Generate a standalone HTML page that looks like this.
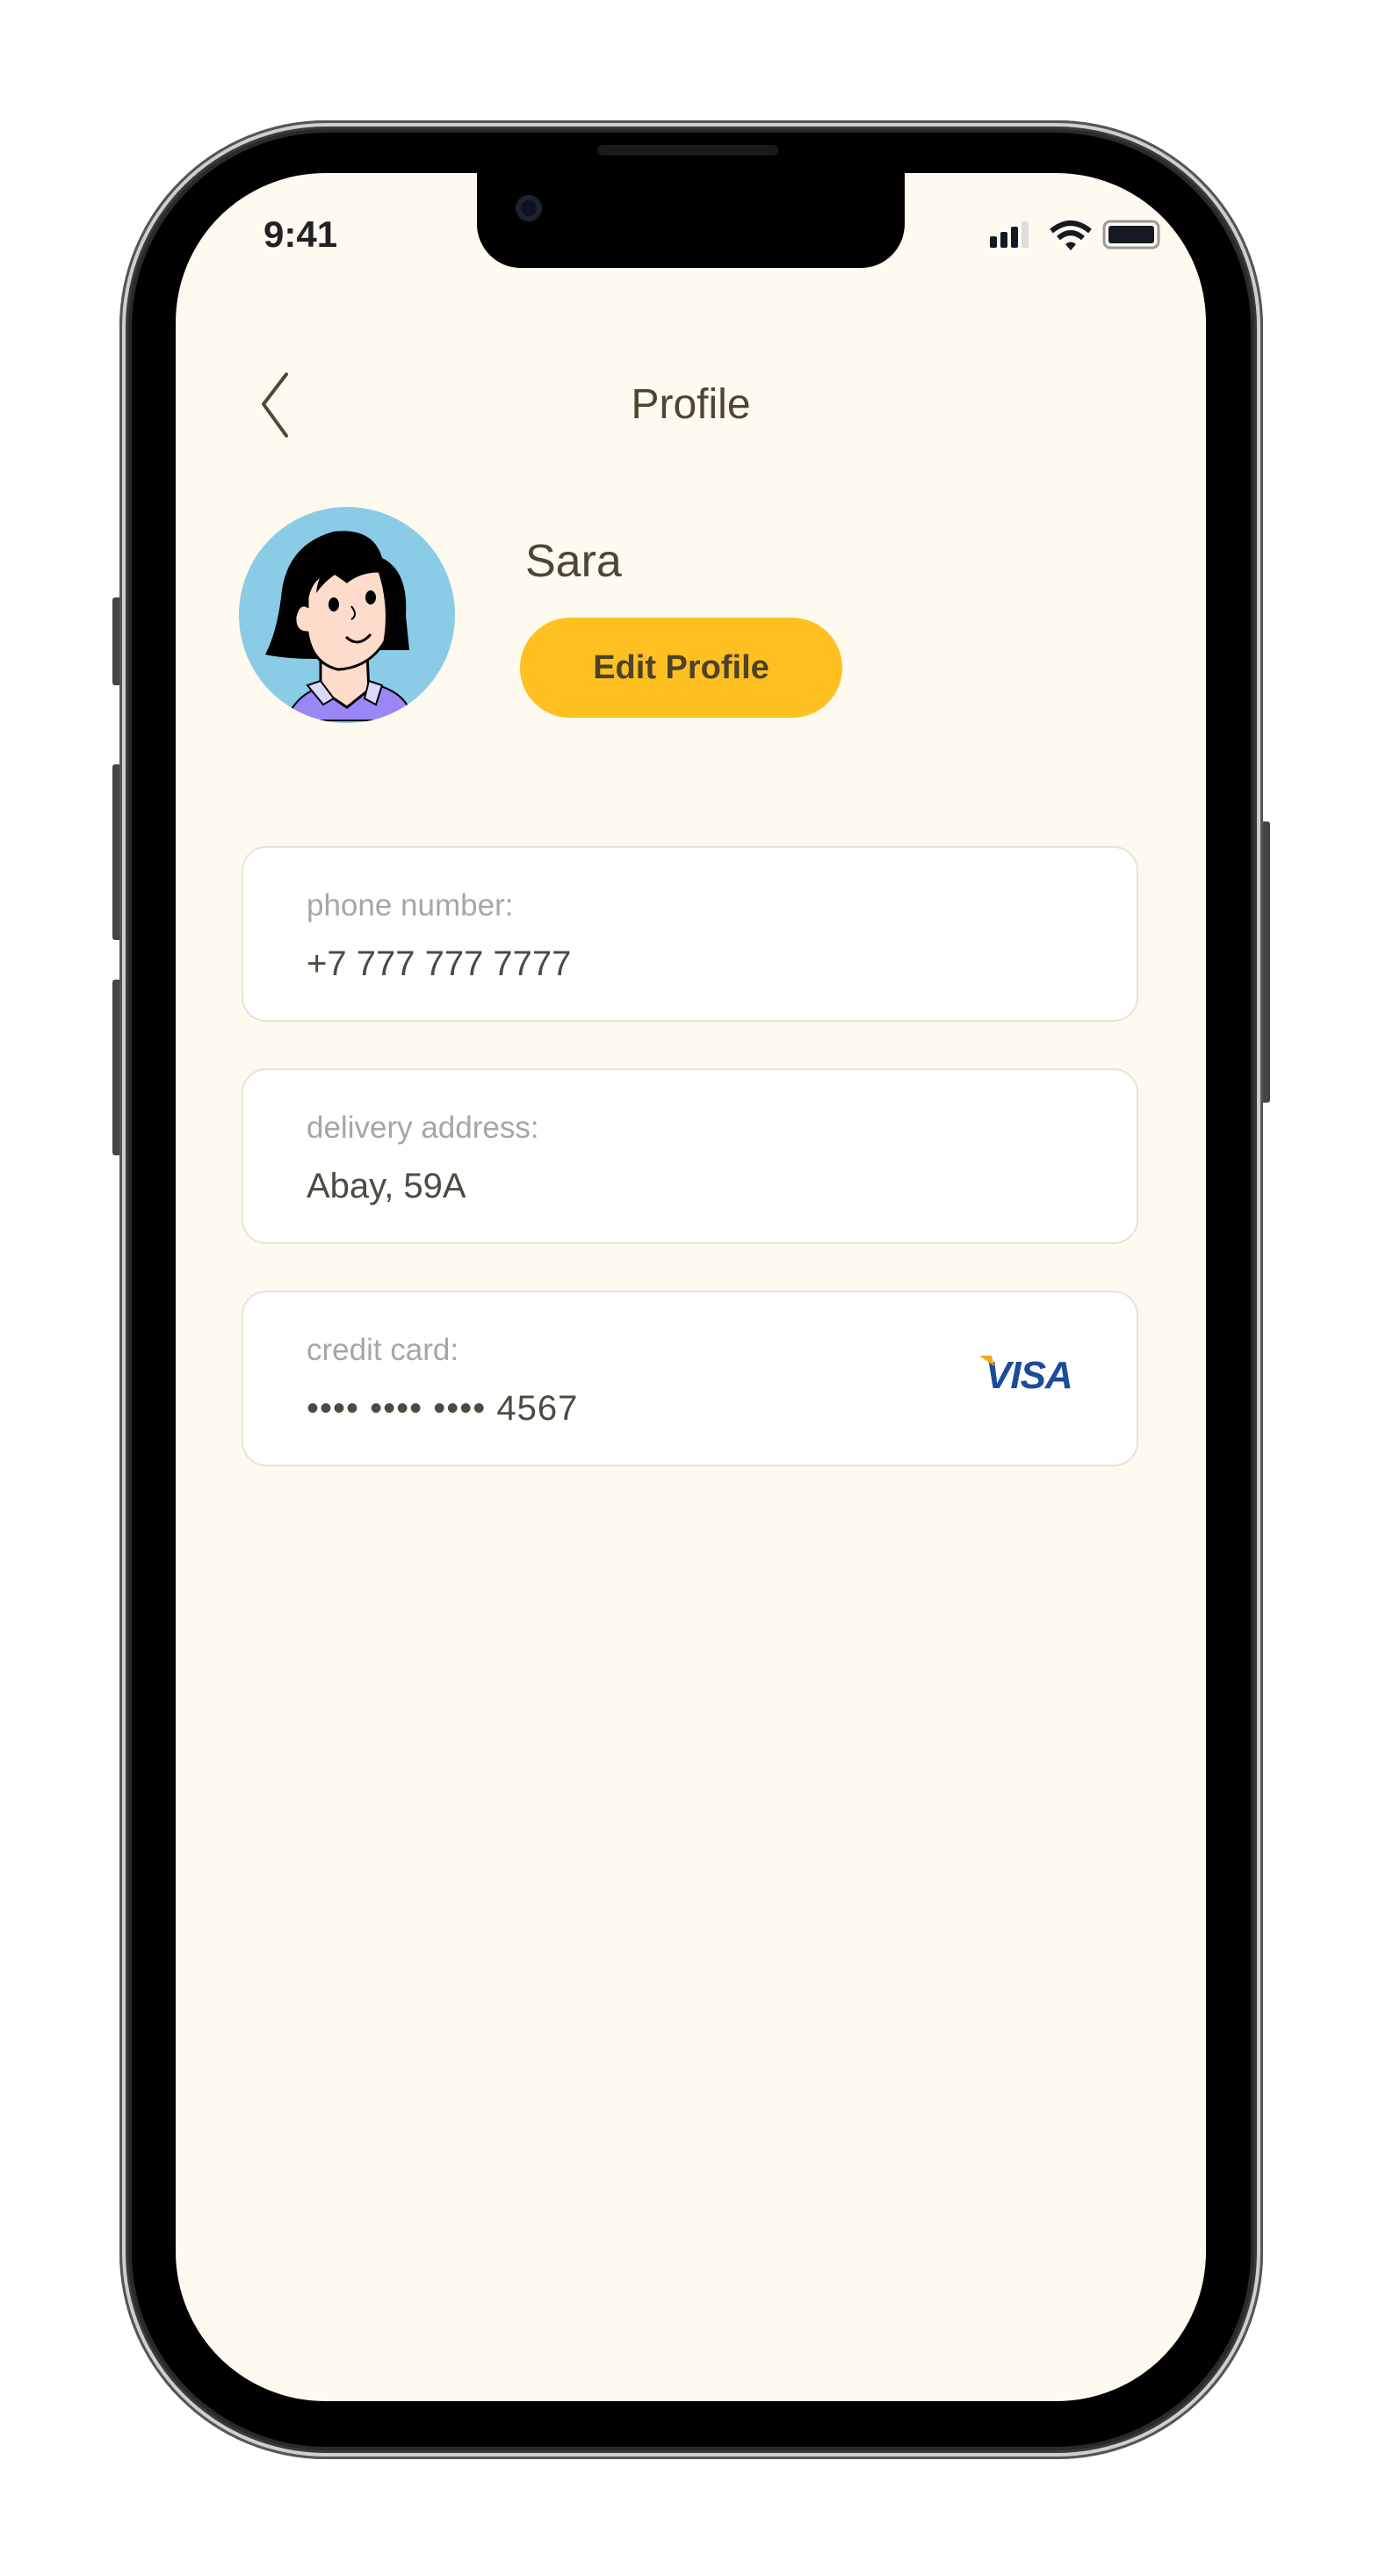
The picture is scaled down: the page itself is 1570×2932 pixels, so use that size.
<!DOCTYPE html>
<html><head><meta charset="utf-8"><style>
html,body{margin:0;padding:0;background:#fff;}
body{width:1570px;height:2932px;position:relative;overflow:hidden;font-family:"Liberation Sans",sans-serif;}
.abs{position:absolute;}
.outer{left:136px;top:137px;width:1302px;height:2662px;border-radius:235px;background:#2a2a2a;box-shadow:inset 0 0 0 3px #555,inset 0 0 0 7px #cfcfcf,inset 0 0 0 10px #3a3a3a;}
.bezel{left:150px;top:151px;width:1274px;height:2634px;border-radius:222px;background:#000;}
.screen{left:200px;top:197px;width:1173px;height:2536px;border-radius:170px;background:#fefaef;overflow:hidden;}
.notch{left:343px;top:-10px;width:487px;height:118px;background:#000;border-radius:0 0 50px 50px;}
.card{left:75px;width:1021px;height:200px;background:#fff;border:2px solid #e6e3db;border-radius:28px;box-sizing:border-box;}
.lab{left:72px;top:46px;font-size:35px;color:#a8a6a1;}
.val{left:72px;top:110px;font-size:40px;color:#4d4a40;}
</style></head><body>
<div class="abs" style="left:128px;top:680px;width:10px;height:100px;background:#444;border-radius:3px"></div>
<div class="abs" style="left:128px;top:870px;width:10px;height:200px;background:#444;border-radius:3px"></div>
<div class="abs" style="left:128px;top:1115px;width:10px;height:200px;background:#444;border-radius:3px"></div>
<div class="abs" style="left:1436px;top:935px;width:10px;height:320px;background:#444;border-radius:3px"></div>
<div class="abs outer"></div>
<div class="abs bezel"></div>
<div class="abs" style="left:680px;top:165px;width:206px;height:12px;border-radius:6px;background:#1a1a1a"></div>
<div class="abs screen">
  <div class="abs notch"></div>
  <div class="abs" style="left:387px;top:25px;width:30px;height:30px;border-radius:50%;background:#0d1320;box-shadow:inset 0 0 0 6px #1b2230"></div>
  <div class="abs" style="left:100px;top:46px;font-size:42px;font-weight:bold;color:#222;">9:41</div>
  <svg class="abs" style="left:925px;top:52px" width="200" height="40" viewBox="0 0 200 40">
    <rect x="2" y="20" width="8" height="13" rx="2" fill="#151a22"/>
    <rect x="14" y="15" width="8" height="18" rx="2" fill="#151a22"/>
    <rect x="26" y="9" width="8" height="24" rx="2" fill="#151a22"/>
    <rect x="38" y="3" width="8" height="30" rx="2" fill="#ddd"/>
    <path d="M72 14 Q94 -4 116 14" stroke="#151a22" stroke-width="6" fill="none"/>
    <path d="M80 22 Q94 10 108 22" stroke="#151a22" stroke-width="6" fill="none"/>
    <path d="M88 29 L94 36 L100 29 Q94 24 88 29Z" fill="#151a22"/>
    <rect x="132" y="3" width="62" height="30" rx="7" fill="none" stroke="#999" stroke-width="3"/>
    <rect x="137" y="8" width="52" height="20" rx="3" fill="#151a22"/>
  </svg>
  <svg class="abs" style="left:90px;top:225px" width="50" height="80" viewBox="0 0 50 80"><path d="M36 4 L10 38 L36 74" stroke="#4d4a38" stroke-width="4" fill="none" stroke-linecap="round" stroke-linejoin="round"/></svg>
  <div class="abs" style="left:0;width:1173px;top:236px;text-align:center;font-size:48px;color:#4d4632;">Profile</div>
  <svg class="abs" style="left:70px;top:373px" width="260" height="260" viewBox="0 0 260 260">
    <defs><clipPath id="c"><circle cx="125" cy="130" r="123"/></clipPath></defs>
    <circle cx="125" cy="130" r="123" fill="#8acbe6"/>
    <g clip-path="url(#c)">
      <path d="M55 250 Q70 215 105 210 L160 210 Q195 220 200 250Z" fill="#9a86f4" stroke="#000" stroke-width="2"/>
      <path d="M95 175 L95 215 L125 235 L150 215 L148 175Z" fill="#fddccc" stroke="#000" stroke-width="3"/>
      <path d="M80 210 L95 205 L110 225 L98 232Z M150 205 L165 210 L158 232 L145 225Z" fill="#dcd8f8" stroke="#000" stroke-width="2"/>
      <path d="M32 175 Q45 150 50 110 Q55 50 110 35 Q155 30 165 65 Q195 80 192 130 L196 170 L150 170 Q120 180 90 180 Q55 180 32 175Z" fill="#000"/>
      <path d="M80 110 Q85 85 108 80 L125 92 Q140 80 162 80 Q175 120 168 160 Q150 190 115 192 Q85 185 80 150 Q65 150 66 132 Q70 115 80 120Z" fill="#fddccc" stroke="#000" stroke-width="3"/>
      <path d="M90 105 Q105 85 120 80 L110 70 Q92 80 90 105Z" fill="#000"/>
      <ellipse cx="110" cy="118" rx="6" ry="8" fill="#000"/>
      <ellipse cx="152" cy="110" rx="6" ry="8" fill="#000"/>
      <path d="M130 120 Q138 130 130 135" stroke="#000" stroke-width="2" fill="none"/>
      <path d="M124 155 Q138 168 152 152" stroke="#000" stroke-width="3" fill="none"/>
    </g>
  </svg>
  <div class="abs" style="left:398px;top:412px;font-size:52px;color:#4d4632;">Sara</div>
  <div class="abs" style="left:392px;top:506px;width:367px;height:114px;border-radius:57px;background:#ffc021;text-align:center;line-height:114px;font-size:38px;font-weight:bold;color:#4d4228;">Edit Profile</div>
  <div class="abs card" style="top:766px"><div class="abs lab">phone number:</div><div class="abs val">+7 777 777 7777</div></div>
  <div class="abs card" style="top:1019px"><div class="abs lab">delivery address:</div><div class="abs val">Abay, 59A</div></div>
  <div class="abs card" style="top:1272px"><div class="abs lab">credit card:</div><div class="abs val" style="letter-spacing:1px">•••• •••• •••• 4567</div>
    <div class="abs" style="left:845px;top:70px;font-size:44px;font-weight:bold;font-style:italic;color:#1a4c9a;letter-spacing:-1px">VISA</div>
    <svg class="abs" style="left:838px;top:70px" width="20" height="16"><path d="M0 2 L14 2 L17 14Z" fill="#f4a81c"/></svg>
  </div>
</div>
</body></html>
